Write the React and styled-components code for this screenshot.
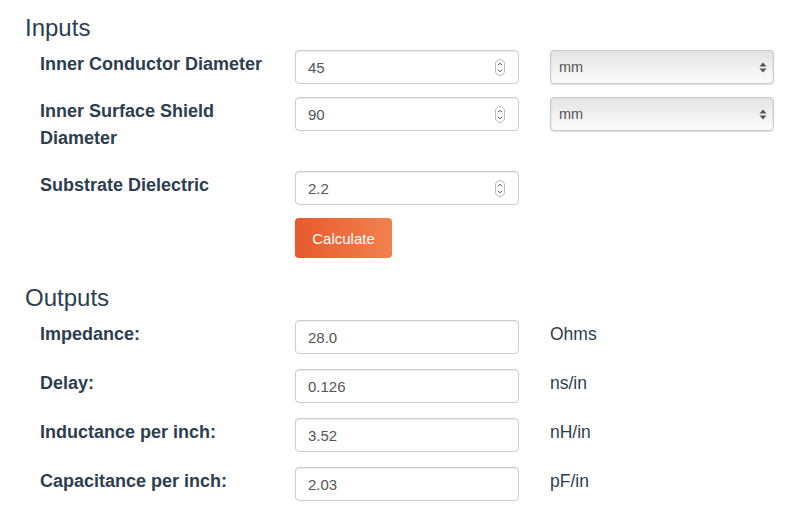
import React from 'react';
import styled, { createGlobalStyle } from 'styled-components';

const GlobalStyle = createGlobalStyle`
    body {
        margin: 0;
        background: #fff;
        font-family: "Liberation Sans", Arial, Helvetica, sans-serif;
        color: #2c3e50;
    }
`;

const Page = styled.div`
    padding: 14px 0 0 0;
    width: 808px;
`;

const Heading = styled.h2`
    margin: ${props => props.$first ? '0' : '26px'} 0 8px 25px;
    font-size: 24px;
    line-height: 28px;
    font-weight: 400;
    color: #2c3e50;
`;

const Row = styled.div`
    display: grid;
    grid-template-columns: repeat(3, 224px);
    column-gap: 31px;
    align-items: start;
    padding-left: 40px;
    margin-bottom: ${props => props.$gap}px;
`;

const Label = styled.label`
    padding-top: 1px;
    margin-bottom: 6px;
    font-size: 18px;
    line-height: 27px;
    font-weight: 700;
    color: #2c3e50;
`;

const Unit = styled.span`
    padding-top: 1px;
    font-size: 17.5px;
    line-height: 27px;
    color: #2c3e50;
`;

const Field = styled.div`
    position: relative;
    width: 224px;
    height: 34px;
`;

const Input = styled.input`
    box-sizing: border-box;
    width: 100%;
    height: 34px;
    padding: 6px 12px;
    border: 1px solid #ccc;
    border-radius: 4px;
    box-shadow: inset 0 1px 1px rgba(0, 0, 0, 0.075);
    font-family: inherit;
    font-size: 15px;
    color: #555;
    background: #fff;
    outline: none;
    appearance: textfield;
    -moz-appearance: textfield;

    &::-webkit-inner-spin-button,
    &::-webkit-outer-spin-button {
        -webkit-appearance: none;
        margin: 0;
    }
`;

const Spinner = styled.svg`
    position: absolute;
    right: 14px;
    top: 9px;
    pointer-events: none;
`;

const Select = styled.select`
    box-sizing: border-box;
    width: 224px;
    height: 34px;
    padding: 0 24px 0 8px;
    border: 1px solid #c9c9c9;
    border-radius: 4px;
    appearance: none;
    -webkit-appearance: none;
    font-family: inherit;
    font-size: 14.5px;
    color: #555;
    background:
        url("data:image/svg+xml,%3Csvg xmlns='http://www.w3.org/2000/svg' width='8' height='11'%3E%3Cpath d='M4 0.5L7.5 4.6H0.5z M4 10.5L7.5 6.4H0.5z' fill='%23555'/%3E%3C/svg%3E") no-repeat right 6px center,
        linear-gradient(#e3e3e3, #eeeeee 40%, #f9f9f9 85%, #fdfdfd);
    box-shadow: 0 1px 1px rgba(0, 0, 0, 0.12), inset 1px 0 1px rgba(0, 0, 0, 0.04), inset -1px 0 1px rgba(0, 0, 0, 0.04);
`;

const Button = styled.button`
    width: 97px;
    height: 40px;
    border: none;
    border-radius: 4px;
    background: linear-gradient(to right, #e8592d, #f0824f);
    color: #fff;
    font-family: inherit;
    font-size: 15px;
    cursor: pointer;
    grid-column: 2;
`;

const Stepper = () => (
    <Spinner width="10" height="17" viewBox="0 0 10 17">
        <rect x="0.5" y="0.5" width="9" height="16" rx="4.5" fill="#fff" stroke="#b9b9b9" />
        <path d="M3 6.2L5 4.2L7 6.2" fill="none" stroke="#444" strokeWidth="1" />
        <path d="M3 10.8L5 12.8L7 10.8" fill="none" stroke="#444" strokeWidth="1" />
    </Spinner>
);

const NumberField = ({ value }) => (
    <Field>
        <Input type="number" defaultValue={value} step="any" />
        <Stepper />
    </Field>
);

const UnitSelect = () => (
    <Select defaultValue="mm">
        <option value="mm">mm</option>
        <option value="cm">cm</option>
        <option value="mil">mil</option>
        <option value="in">in</option>
    </Select>
);

const outputs = [
    { label: 'Impedance:', value: '28.0', unit: 'Ohms' },
    { label: 'Delay:', value: '0.126', unit: 'ns/in' },
    { label: 'Inductance per inch:', value: '3.52', unit: 'nH/in' },
    { label: 'Capacitance per inch:', value: '2.03', unit: 'pF/in' },
];

export default function App() {
    return (
        <Page>
            <GlobalStyle />
            <Heading $first>Inputs</Heading>
            <Row $gap={13}>
                <Label>Inner Conductor Diameter</Label>
                <NumberField value="45" />
                <UnitSelect />
            </Row>
            <Row $gap={13}>
                <Label>Inner Surface Shield Diameter</Label>
                <NumberField value="90" />
                <UnitSelect />
            </Row>
            <Row $gap={13}>
                <Label>Substrate Dielectric</Label>
                <NumberField value="2.2" />
            </Row>
            <Row $gap={0}>
                <Button>Calculate</Button>
            </Row>

            <Heading>Outputs</Heading>
            {outputs.map(o => (
                <Row key={o.label} $gap={15}>
                    <Label>{o.label}</Label>
                    <Field>
                        <Input type="text" readOnly value={o.value} />
                    </Field>
                    <Unit>{o.unit}</Unit>
                </Row>
            ))}
        </Page>
    );
}
